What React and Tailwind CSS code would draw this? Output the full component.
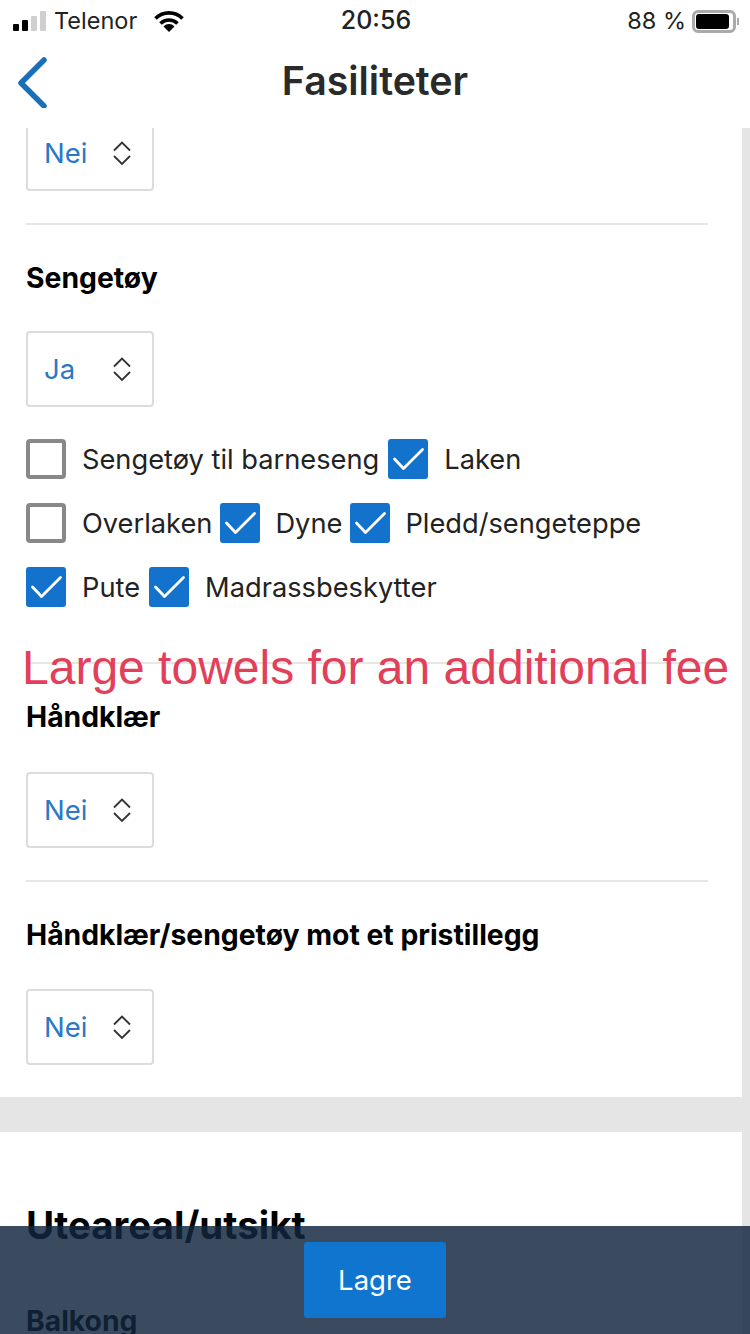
const font = { inter: "font-['Inter',sans-serif]" };

function Select({ value, className = "" }) {
  return (
    <div className={`flex h-[76px] w-[128px] items-center rounded-[4px] border-2 border-[#dcdcdc] pl-[16px] ${className}`}>
      <span className="mt-[2px] w-[68px] text-[27.5px] text-[#2a78c6]">{value}</span>
      <svg width="20" height="24" viewBox="0 0 20 24" fill="none" stroke="#333" strokeWidth="1.8">
        <path d="M2 9.5 10 1.5l8 8" />
        <path d="M2 15l8 8 8-8" />
      </svg>
    </div>
  );
}

function Box({ label, checked, tight, near }) {
  return (
    <div className="flex items-center">
      {checked ? (
        <div className="h-[40px] w-[40px] rounded-[3px] bg-[#1272cc]">
          <svg width="40" height="40" viewBox="0 0 40 40" fill="none" stroke="#fff" strokeWidth="2.8" strokeLinecap="round" strokeLinejoin="round">
            <path d="M6.5 20l9 9.5L34.5 10.5" />
          </svg>
        </div>
      ) : (
        <div className="h-[40px] w-[40px] rounded-[4px] border-4 border-[#888]" />
      )}
      <span className={`h-[40px] text-[27.25px] leading-[42px] text-[#222] ${near ? "ml-[15px]" : "ml-[16px]"} ${tight ? "mr-[8px]" : "mr-[9px]"}`}>{label}</span>
    </div>
  );
}

function Heading({ children, className = "" }) {
  return <h3 className={`text-[28.3px] font-bold leading-[34px] text-black ${className}`}>{children}</h3>;
}

export default function App() {
  return (
    <div className={`relative flex h-[1334px] w-[750px] flex-col overflow-hidden bg-white ${font.inter}`}>
      {/* status bar */}
      <div className="flex h-[42px] shrink-0 items-center justify-between pl-[13px] pr-[11px] text-[23.5px] text-[#222]">
        <div className="flex w-[260px] items-center">
          <div className="flex items-end gap-[3px]">
            <div className="h-[7px] w-[6px] rounded-[1px] bg-black" />
            <div className="h-[11px] w-[6px] rounded-[1px] bg-black" />
            <div className="h-[15px] w-[6px] rounded-[1px] bg-[#cfcfcf]" />
            <div className="h-[20px] w-[6px] rounded-[1px] bg-[#cfcfcf]" />
          </div>
          <span className="ml-[8px]">Telenor</span>
          <svg className="ml-[17px]" width="30" height="22" viewBox="0 0 30 22" fill="none" stroke="#000" strokeWidth="3.6">
            <path d="M1.5 8.5a19 19 0 0 1 27 0" />
            <path d="M6.5 13.5a12 12 0 0 1 17 0" />
            <path d="M15 22l-5.5-5.5a7.5 7.5 0 0 1 11 0z" fill="#000" stroke="none" />
          </svg>
        </div>
        <span className="text-[25px] font-medium">20:56</span>
        <div className="flex w-[260px] items-center justify-end">
          <span>88 %</span>
          <div className="ml-[6px] flex h-[23px] w-[44px] items-center rounded-[6px] border-[3px] border-[#aaa] p-[1px]">
            <div className="h-full w-[33px] rounded-[3px] bg-black" />
          </div>
          <div className="ml-[1px] h-[7px] w-[2px] bg-[#aaa]" />
        </div>
      </div>

      {/* nav */}
      <div className="relative z-10 flex h-[86px] shrink-0 items-center justify-center bg-white">
        <svg className="absolute left-[16px] top-[14px]" width="34" height="52" viewBox="0 0 34 52" fill="none" stroke="#1a70b8" strokeWidth="5.5" strokeLinecap="round" strokeLinejoin="round">
          <path d="M28 4 5 27l23 23" />
        </svg>
        <h1 className="-mt-[7px] text-[39.3px] font-semibold text-[#2a2a2a]">Fasiliteter</h1>
      </div>

      {/* scroll area */}
      <div className="flex min-h-0 flex-1 bg-[#e5e5e5]">
        <div className="w-[742px] shrink-0 overflow-hidden">
          <div className="bg-white pl-[26px] pr-[34px] pb-[32px]">
            <Select value="Nei" className="-mt-[13px]" />
            <div className="mt-[32px] h-[2px] bg-[#e6e6e6]" />
            <Heading className="mt-[36px]">Sengetøy</Heading>
            <Select value="Ja" className="mt-[36px]" />
            <div className="mt-[32px] flex flex-col gap-[24px]">
              <div className="flex">
                <Box label="Sengetøy til barneseng" />
                <Box label="Laken" checked />
              </div>
              <div className="flex">
                <Box label="Overlaken" tight />
                <Box label="Dyne" checked tight near />
                <Box label="Pledd/sengeteppe" checked near />
              </div>
              <div className="flex">
                <Box label="Pute" checked />
                <Box label="Madrassbeskytter" checked />
              </div>
            </div>
            <div className="mt-[55px] h-[2px] bg-[#e6e6e6]" />
            <Heading className="mt-[36px]">Håndklær</Heading>
            <Select value="Nei" className="mt-[38px]" />
            <div className="mt-[32px] h-[2px] bg-[#e6e6e6]" />
            <Heading className="mt-[36px]">Håndklær/sengetøy mot et pristillegg</Heading>
            <Select value="Nei" className="mt-[37px]" />
          </div>
          <div className="mt-[35px] bg-white pl-[26px]">
            <h2 className="pt-[70px] text-[38.5px] font-bold leading-[46px] text-black">Uteareal/utsikt</h2>
            <Heading className="mt-[56px]">Balkong</Heading>
            <div className="h-[60px]" />
          </div>
        </div>
      </div>

      {/* annotation */}
      <div className="absolute left-[22px] top-[640px] font-['Liberation_Sans',sans-serif] text-[48px] leading-[56px] whitespace-nowrap text-[#e2405a]">
        Large towels for an additional fee
      </div>

      {/* save bar */}
      <div className="absolute inset-x-0 bottom-0 flex h-[108px] justify-center bg-[#12263f]/[0.83] pt-[16px]">
        <button className="h-[76px] w-[142px] rounded-[3px] bg-[#0f75cf] pt-[2px] text-[27.5px] text-white">Lagre</button>
      </div>
    </div>
  );
}
